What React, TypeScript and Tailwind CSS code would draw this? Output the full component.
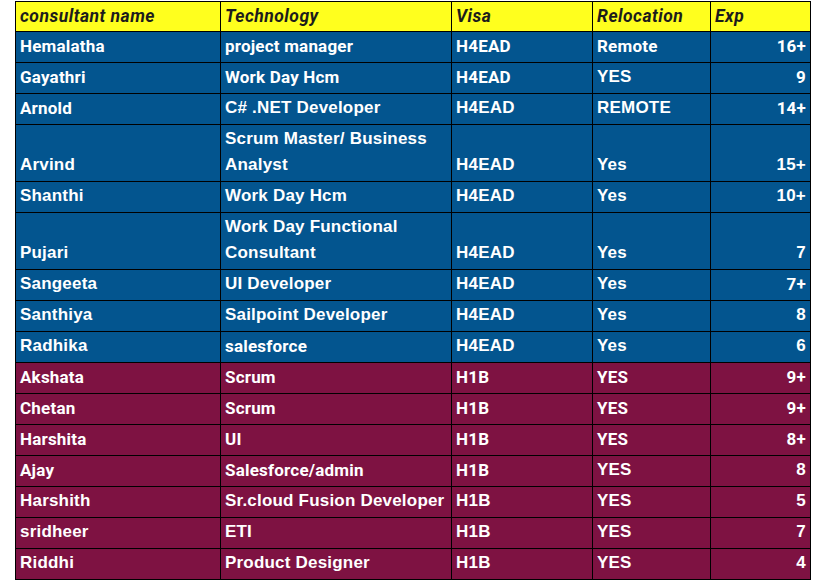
const DIN = "font-['Roboto','Liberation_Sans',sans-serif]";
const ARIAL = "font-['Liberation_Sans','Arial',sans-serif]";

type Row = {
  cells: [string, string, string, string, string];
  fonts: string; // one char per cell: d = DIN-like, a = Arial-like
  tone: "blue" | "maroon";
};

const rows: Row[] = [
  { cells: ["Hemalatha", "project manager", "H4EAD", "Remote", "16+"], fonts: "ddddd", tone: "blue" },
  { cells: ["Gayathri", "Work Day Hcm", "H4EAD", "YES", "9"], fonts: "dddad", tone: "blue" },
  { cells: ["Arnold", "C# .NET Developer", "H4EAD", "REMOTE", "14+"], fonts: "daaad", tone: "blue" },
  { cells: ["Arvind", "Scrum Master/ Business Analyst", "H4EAD", "Yes", "15+"], fonts: "aaaaa", tone: "blue" },
  { cells: ["Shanthi", "Work Day Hcm", "H4EAD", "Yes", "10+"], fonts: "aaaaa", tone: "blue" },
  { cells: ["Pujari", "Work Day Functional Consultant", "H4EAD", "Yes", "7"], fonts: "aaaaa", tone: "blue" },
  { cells: ["Sangeeta", "UI Developer", "H4EAD", "Yes", "7+"], fonts: "aaaad", tone: "blue" },
  { cells: ["Santhiya", "Sailpoint Developer", "H4EAD", "Yes", "8"], fonts: "aaaaa", tone: "blue" },
  { cells: ["Radhika", "salesforce", "H4EAD", "Yes", "6"], fonts: "adaaa", tone: "blue" },
  { cells: ["Akshata", "Scrum", "H1B", "YES", "9+"], fonts: "ddddd", tone: "maroon" },
  { cells: ["Chetan", "Scrum", "H1B", "YES", "9+"], fonts: "ddddd", tone: "maroon" },
  { cells: ["Harshita", "UI", "H1B", "YES", "8+"], fonts: "ddddd", tone: "maroon" },
  { cells: ["Ajay", "Salesforce/admin", "H1B", "YES", "8"], fonts: "dddaa", tone: "maroon" },
  { cells: ["Harshith", "Sr.cloud Fusion Developer", "H1B", "YES", "5"], fonts: "aaaaa", tone: "maroon" },
  { cells: ["sridheer", "ETI", "H1B", "YES", "7"], fonts: "aaaaa", tone: "maroon" },
  { cells: ["Riddhi", "Product Designer", "H1B", "YES", "4"], fonts: "aaaaa", tone: "maroon" },
];

const headers = ["consultant name", "Technology", "Visa", "Relocation", "Exp"];
const widths = ["w-[205px]", "w-[231px]", "w-[141px]", "w-[118px]", "w-[100px]"];

export default function App() {
  return (
    <div className="min-h-[581px] w-[822px] bg-white pl-[15px] pt-[1px]">
      <table className="w-[795px] table-fixed border-collapse font-bold">
        <colgroup>
          {widths.map((w, i) => (
            <col key={i} className={w} />
          ))}
        </colgroup>
        <thead>
          <tr className="bg-[#ffff1e]">
            {headers.map((h) => (
              <th
                key={h}
                className={`h-[30px] border border-black px-[4px] pb-[2px] text-left align-bottom text-[17.5px] italic leading-[26px] tracking-[0.5px] text-[#1c1c1c] ${DIN}`}
              >
                {h}
              </th>
            ))}
          </tr>
        </thead>
        <tbody>
          {rows.map((row) => (
            <tr
              key={row.cells[0]}
              className={row.tone === "blue" ? "bg-[#03558f]" : "bg-[#7e1242]"}
            >
              {row.cells.map((c, i) => (
                <td
                  key={i}
                  className={`h-[31px] border border-black px-[4px] pt-[1px] pb-[3px] align-bottom text-[17px] leading-[26px] tracking-[0.2px] text-white ${
                    row.fonts[i] === "d" ? DIN : ARIAL
                  } ${i === 4 ? "text-right" : "text-left"} ${i === 1 ? "pr-[2px]" : ""}`}
                >
                  {c}
                </td>
              ))}
            </tr>
          ))}
        </tbody>
      </table>
    </div>
  );
}
